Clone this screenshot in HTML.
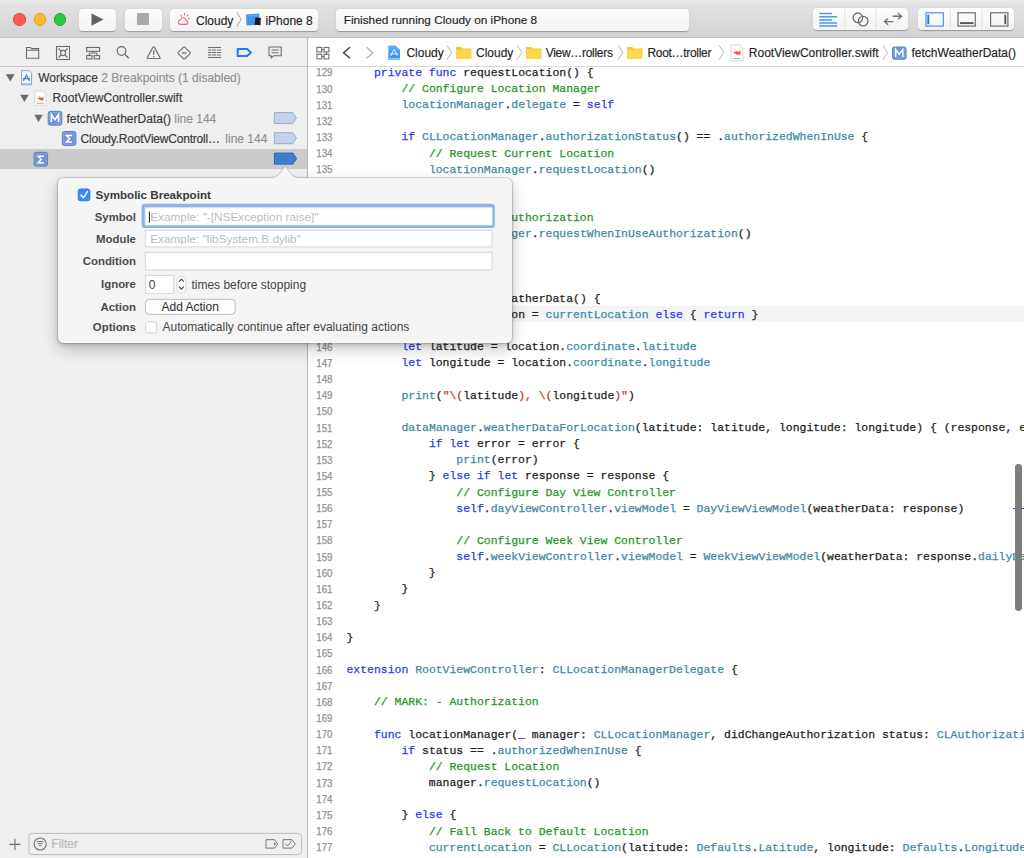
<!DOCTYPE html>
<html><head><meta charset="utf-8">
<style>
*{box-sizing:border-box;margin:0;padding:0}
html,body{width:1024px;height:858px;overflow:hidden;background:#fff;font-family:"Liberation Sans",sans-serif;position:relative}
.abs{position:absolute}
#toolbar{left:0;top:0;width:1024px;height:38.3px;background:linear-gradient(#ebebeb,#e3e3e3 12%,#d2d2d2);border-bottom:1px solid #c3c3c3}
.light{position:absolute;top:13.35px;width:12.2px;height:12.2px;border-radius:50%}
.tbtn{position:absolute;top:8.6px;height:22px;border-radius:4px;background:linear-gradient(#fdfdfd,#f3f3f3);box-shadow:0 0.5px 1px rgba(0,0,0,.28)}
.t12{font-size:12px;color:#242424;white-space:nowrap;-webkit-text-stroke:0.15px currentColor}
#sidebar{left:0;top:38px;width:307px;height:820px;background:#efefef}
#divider{left:307px;top:38px;width:1px;height:820px;background:#b9b9b9}
#navbar{left:0;top:38px;width:307px;height:29px;border-bottom:1px solid #c9c9c9;background:#efefef}
#editor{left:308px;top:38px;width:716px;height:820px;background:#fff}
#jump{left:308px;top:38px;width:716px;height:29px;border-bottom:1px solid #d9d9d9;background:#fff}
#code{left:308px;top:67px;width:716px;height:791px;overflow:hidden}
.lnum{font-family:"Liberation Sans",sans-serif;font-size:10.3px;line-height:16.14px;text-align:right;color:#929292;transform:scaleX(0.94);transform-origin:100% 0}
pre{font-family:"Liberation Mono",monospace;font-size:11.45px;line-height:16.14px;color:#1e1e1e;-webkit-text-stroke:0.25px currentColor}

.k{color:#2e39e6}
.f{color:#3a89a5}
.c{color:#1f971f}
.s{color:#c5352a}
.row{position:absolute;left:0;width:307px;height:20.3px}
.sb{color:#383838}
.gray{color:#8f8f8f}
.pb{font-size:11.6px;font-weight:bold;color:#3a3a3a;white-space:nowrap}
.pl{left:0;width:135.9px;text-align:right;font-size:11.4px;font-weight:bold;color:#4a4a4a;white-space:nowrap}
.ph{font-size:11.8px;color:#bcbcbc;white-space:nowrap}
.pt{font-size:12px;color:#454545;white-space:nowrap}
</style></head><body>

<!-- TOOLBAR -->
<div id="toolbar" class="abs">
  <div class="light" style="left:13.4px;background:#fc5b57;border:0.5px solid #e2463f"></div>
  <div class="light" style="left:33.7px;background:#fdbb2e;border:0.5px solid #e09f1e"></div>
  <div class="light" style="left:53.7px;background:#2ac840;border:0.5px solid #1aab2a"></div>
  <div class="tbtn" style="left:79px;width:37px"></div>
  <svg class="abs" style="left:91px;top:13px" width="13" height="14"><path d="M0.5 0.5 L12.5 6.6 L0.5 12.8 Z" fill="#636363"/></svg>
  <div class="tbtn" style="left:124.5px;width:37.5px"></div>
  <div class="abs" style="left:137px;top:13.3px;width:12.3px;height:12px;background:#a9a9a9"></div>
  <div class="tbtn" style="left:169.7px;width:148.5px"></div>
  <svg class="abs" style="left:170px;top:8px" width="150" height="23" fill="none">
    <g stroke="#f06b6b" stroke-width="1.15" stroke-linecap="round">
      <path d="M10.6 16.4 H15.9 Q17.9 16.4 17.9 14.5 Q17.9 12.7 16.1 12.5 Q15.7 9.7 13.1 9.7 Q10.9 9.7 10.3 11.8 Q8.4 12 8.4 14.1 Q8.4 16.4 10.6 16.4 Z"/>
      <path d="M14.5 5.6 V6.7 M17.9 7.2 L17.2 7.9 M19.3 10.8 H18.4 M10.8 7.4 L11.5 8.1"/>
    </g>
    <path d="M66.8 4.3 L71.2 11.4 L66.8 18.5" stroke="#a8a8a8" stroke-width="1"/>
    <path d="M76 6.4 L89.2 5.6 L89.8 16.8 L76.6 17.6 Z" fill="#3f97ee"/>
    <path d="M78 8 L87.6 7.4" stroke="#7cc0f8" stroke-width="0.7"/>
    <path d="M85.4 9.3 L90.9 9.9 L90.4 17.2 L84.6 16.8 Z" fill="#1c1c1c"/>
  </svg>
  <div class="abs t12" style="left:196px;top:13.5px">Cloudy</div>
  <div class="abs t12" style="left:265.4px;top:13.5px">iPhone 8</div>
  <div class="tbtn" style="left:336px;width:353px"></div>
  <div class="abs t12" style="left:343.7px;top:12.6px;font-size:11.8px">Finished running Cloudy on iPhone 8</div>
  <div class="tbtn" style="left:813px;width:95.2px;top:8.2px;height:22px"></div>
  <div class="tbtn" style="left:918.1px;width:95.8px;top:8.2px;height:22px"></div>
  <svg class="abs" style="left:812px;top:8px" width="212" height="23" fill="none">
    <path d="M32.7 0.5 V22 M64 0.5 V22 M138.3 0.5 V22 M170.2 0.5 V22" stroke="#dedede" stroke-width="0.8"/>
    <g stroke="#4f94f6" stroke-width="1.5">
      <path d="M7.3 5.6 H20 M7.3 8.7 H25.2 M7.3 11.9 H20 M7.3 15 H25.2 M7.3 18.1 H25.2"/>
    </g>
    <g stroke="#6e6e6e" stroke-width="1.3">
      <circle cx="45.9" cy="9.8" r="4.8"/><circle cx="51.2" cy="13.1" r="4.8"/>
    </g>
    <g stroke="#6e6e6e" stroke-width="1.3">
      <path d="M80.6 8.25 H89.6 M86 5.2 L89.6 8.25 L86 11.3"/>
      <path d="M72.5 13.6 H81.5 M76.1 10.6 L72.5 13.6 L76.1 16.7"/>
    </g>
    <rect x="114" y="4.8" width="17.3" height="13.3" stroke="#4a90f6" stroke-width="1.2"/>
    <path d="M116.3 6.8 V16.2" stroke="#1f74f3" stroke-width="1.9"/>
    <rect x="146" y="4.8" width="17.3" height="13.3" stroke="#6e6e6e" stroke-width="1.2"/>
    <path d="M148 15.1 H161.5" stroke="#555" stroke-width="1.9"/>
    <rect x="178.6" y="4.8" width="17.3" height="13.3" stroke="#6e6e6e" stroke-width="1.2"/>
    <path d="M193.3 6.8 V16.2" stroke="#555" stroke-width="1.9"/>
  </svg>
</div>

<!-- SIDEBAR -->
<div id="sidebar" class="abs"></div>
<div id="navbar" class="abs"></div>
<!-- nav toolbar icons -->
<svg class="abs" style="left:0;top:38px" width="307" height="29" fill="none" stroke="#6d6d6d" stroke-width="1.1">
  <!-- folder -->
  <path d="M26.5 9.5 V20.2 H38.7 V10.6 H31.5 L30.5 9.5 Z M26.5 12.2 H38.7"/>
  <!-- square x -->
  <rect x="56.5" y="8.5" width="13" height="13"/>
  <circle cx="63" cy="15" r="2.6"/>
  <path d="M58.5 10.5 L61 13 M67.5 10.5 L65 13 M58.5 19.5 L61 17 M67.5 19.5 L65 17"/>
  <!-- hierarchy -->
  <rect x="86.6" y="9.5" width="13" height="3.8"/>
  <path d="M93.1 13.3 V15 M89.3 15 H96.9 M89.3 15 V17.6 M96.9 15 V17.6"/>
  <rect x="86.6" y="17.6" width="5.4" height="3.3"/>
  <rect x="94.2" y="17.6" width="5.4" height="3.3"/>
  <!-- magnifier -->
  <circle cx="121.5" cy="13" r="4.3" stroke-width="1.2"/>
  <path d="M124.6 16.1 L128.8 20.3" stroke-width="1.4"/>
  <!-- warning -->
  <path d="M152.9 9.4 Q153.7 8.2 154.5 9.4 L160 19.4 Q160.6 20.5 159.3 20.5 H148.1 Q146.8 20.5 147.4 19.4 Z"/>
  <path d="M153.7 12.3 V16.8 M153.7 18 V19.2" stroke-width="1.2"/>
  <!-- diamond -->
  <path d="M183.4 9.4 Q184.2 8.6 185 9.4 L189.9 14.2 Q190.7 15 189.9 15.8 L185 20.6 Q184.2 21.4 183.4 20.6 L178.5 15.8 Q177.7 15 178.5 14.2 Z"/>
  <path d="M181.8 15 H186.6" stroke-width="1.3"/>
  <!-- list -->
  <path d="M208 9.5 H221 M208 12 H221 M208 14.5 H221 M208 17 H221 M208 19.5 H221" stroke-width="1"/>
  <path d="M211.5 11 V18.5 M216.5 11 V18.5" stroke="#efefef" stroke-width="0.8"/>
  <!-- breakpoint selected -->
  <path d="M237.7 11.1 H247.2 L250.9 14.5 L247.2 17.9 H237.7 Z" stroke="#1a7cf5" stroke-width="2" stroke-linejoin="round"/>
  <!-- comment -->
  <path d="M269 9 H281.2 V17.8 H273.5 L271.2 19.9 V17.8 H269 Z" stroke-linejoin="round"/>
  <path d="M271.5 12 H278.7 M271.5 14.8 H278.7" stroke-width="1"/>
</svg>

<!-- rows -->
<div class="abs" style="left:0;top:148.5px;width:307px;height:20px;background:#cbcbcb"></div>
<svg class="abs" style="left:0;top:67px" width="307" height="102">
  <path d="M5.9 7.2 H14.6 L10.25 14.5 Z" fill="#6b6b6b"/>
  <path d="M20.2 27.7 H28.7 L24.45 35 Z" fill="#6b6b6b"/>
  <path d="M34.2 47.8 H42.8 L38.5 55 Z" fill="#6b6b6b"/>
  <!-- workspace icon -->
  <path d="M21.5 3.7 H29.2 L31.6 6.1 V17.8 H21.5 Z" fill="#f7fafe" stroke="#7fa8d2" stroke-width="1"/>
  <path d="M22 16.2 H31.1 V17.6 H22 Z" fill="#8db4e0"/>
  <path d="M23.4 13.9 L26.4 8 L29.5 13.9 M22.8 11.6 H30" fill="none" stroke="#4382c4" stroke-width="1.25"/>
  <!-- swift file icon -->
  <path d="M34.8 24 H43 L46.1 27.1 V38.3 H34.8 Z" fill="#fdfdfd" stroke="#cfcfcf" stroke-width="0.8"/>
  <path d="M36.9 30.8 Q39.5 33.8 43.4 33.4 Q44 31.5 43.3 29.2 Q42.8 30.6 41.5 31 Q39.8 30.4 38.6 28.5 Q39 30 40 31.1 Q38.3 30.6 36.9 30.8 Z" fill="#f05138"/>
  <path d="M37 36.3 H44" stroke="#9a9a9a" stroke-width="0.8"/>
  <!-- M icon -->
  <rect x="48.2" y="44.3" width="13.6" height="13.9" rx="2.2" fill="#6f93d4" stroke="#4d7bc7" stroke-width="0.9"/>
  <rect x="49.3" y="45.4" width="11.4" height="11.7" rx="1.2" fill="none" stroke="#8fabe0" stroke-width="0.6"/>
  <path d="M51.4 55.1 V47.5 L54.95 52.6 L58.5 47.5 V55.1" fill="none" stroke="#fff" stroke-width="1.6" stroke-linejoin="miter"/>
  <!-- sigma row4 -->
  <rect x="62.3" y="64.5" width="13.6" height="13.9" rx="2.2" fill="#6f93d4" stroke="#4d7bc7" stroke-width="0.9"/>
  <rect x="63.4" y="65.6" width="11.4" height="11.7" rx="1.2" fill="none" stroke="#8fabe0" stroke-width="0.6"/>
  <path d="M72.1 68.4 H66.4 L69.6 71.7 L66.4 75 H72.1" fill="none" stroke="#fff" stroke-width="1.5"/>
  <!-- sigma row5 -->
  <rect x="34" y="85.3" width="13.6" height="13.9" rx="2.2" fill="#6f93d4" stroke="#4d7bc7" stroke-width="0.9"/>
  <rect x="35.1" y="86.4" width="11.4" height="11.7" rx="1.2" fill="none" stroke="#8fabe0" stroke-width="0.6"/>
  <path d="M43.8 89.2 H38.1 L41.3 92.5 L38.1 95.8 H43.8" fill="none" stroke="#fff" stroke-width="1.5"/>
  <!-- breakpoint indicators -->
  <path d="M274.4 45.6 H292.8 L296.4 51.1 L292.8 56.6 H274.4 Z" fill="#c3d3ea" stroke="#97aed2" stroke-width="1"/>
  <path d="M274.4 65.7 H292.8 L296.4 71.2 L292.8 76.7 H274.4 Z" fill="#c3d3ea" stroke="#97aed2" stroke-width="1"/>
  <path d="M274.4 86.1 H292.8 L296.6 91.6 L292.8 97.1 H274.4 Z" fill="#3d7bcf" stroke="#2a5eb0" stroke-width="1"/>
  <path d="M275.6 87.3 H292.2 L295.1 91.6 L292.2 95.9 H275.6 Z" fill="none" stroke="#5a92dc" stroke-width="0.5"/>
</svg>
<div class="abs t12 sb" style="left:38.2px;top:71.4px">Workspace <span class="gray">2 Breakpoints (1 disabled)</span></div>
<div class="abs t12 sb" style="left:52.4px;top:91.3px">RootViewController.swift</div>
<div class="abs t12 sb" style="left:66.4px;top:111.6px">fetchWeatherData() <span class="gray">line 144</span></div>
<div class="abs t12 sb" style="left:80.5px;top:131.6px;letter-spacing:-0.21px">Cloudy.RootViewControll…</div>
<div class="abs t12 gray" style="left:225.3px;top:131.6px">line 144</div>

<!-- filter bar -->
<svg class="abs" style="left:0;top:826px" width="307" height="32" fill="none">
  <path d="M9.3 18.4 H20.5 M14.9 12.8 V24" stroke="#6f6f6f" stroke-width="1.1"/>
  <rect x="29" y="7.4" width="272.5" height="21.2" rx="3" fill="#efefef" stroke="#bdbdbd" stroke-width="1"/>
  <circle cx="40.2" cy="18" r="6" stroke="#777" stroke-width="1.1"/>
  <path d="M37 15.6 H43.4 M37.8 17.6 H42.6 M38.8 19.6 H41.6" stroke="#777" stroke-width="1"/>
  <path d="M266 13.7 H274.5 L277.8 17.9 L274.5 22.1 H266 Z" stroke="#777" stroke-width="1"/>
  <path d="M274 16 L276 17.9 L274 19.8 Z" fill="#777"/>
  <path d="M283 13.7 H292 L295.3 17.9 L292 22.1 H283 Z" stroke="#777" stroke-width="1"/>
  <path d="M285.5 17.7 L287.7 20 L291.3 15.2" stroke="#777" stroke-width="1"/>
</svg>
<div class="abs t12" style="left:51.3px;top:837.2px;color:#b9b9b9">Filter</div>

<div id="divider" class="abs"></div>

<!-- EDITOR -->
<div id="editor" class="abs"></div>
<div id="jump" class="abs"></div>
<svg class="abs" style="left:308px;top:38px" width="716" height="29" fill="none">
  <!-- grid icon -->
  <g stroke="#6f6f6f" stroke-width="1.1">
    <rect x="8.9" y="9.4" width="4.8" height="4.6"/><rect x="16.1" y="9.4" width="4.8" height="4.6"/>
    <rect x="8.9" y="16.3" width="4.8" height="4.6"/><rect x="16.1" y="16.3" width="4.8" height="4.6"/>
    <path d="M13.7 11.7 H16.1 M13.7 18.6 H16.1 M18.5 14 V16.3"/>
  </g>
  <path d="M42 9.3 L35.6 14.8 L42 20.3" stroke="#3a3a3a" stroke-width="1.4"/>
  <path d="M58.7 9.3 L64.8 14.8 L58.7 20.3" stroke="#b3b3b3" stroke-width="1.3"/>
  <!-- project icon -->
  <defs><linearGradient id="pg" x1="0" y1="0" x2="0" y2="1"><stop offset="0" stop-color="#5db3f8"/><stop offset="1" stop-color="#2f86e6"/></linearGradient></defs>
  <path d="M80.3 7.6 H87.6 L92 12 V21.9 H80.3 Z" fill="url(#pg)"/>
  <path d="M80.3 19.8 H92 V21.9 H80.3 Z" fill="#8cc2f5"/>
  <path d="M82.6 18.2 L86.1 11.4 L89.6 18.2 M82 15.9 H90.3" stroke="#eaf5ff" stroke-width="0.9"/>
  <!-- chevrons -->
  <g stroke="#b5b5b5" stroke-width="1">
    <path d="M138.9 7.5 L143.6 14.5 L138.9 21.5"/>
    <path d="M209.2 7.5 L213.9 14.5 L209.2 21.5"/>
    <path d="M310.2 7.5 L314.9 14.5 L310.2 21.5"/>
    <path d="M411.2 7.5 L415.9 14.5 L411.2 21.5"/>
    <path d="M574.9 7.5 L579.6 14.5 L574.9 21.5"/>
  </g>
  <!-- folders -->
  <g>
    <path d="M148 9 H153.3 L154.5 10.4 H163.3 V21 H148 Z" fill="#f5c72c"/>
    <path d="M148 11.6 H163.3 V21 H148 Z" fill="#fbd84a"/>
    <path d="M218 9 H223.3 L224.5 10.4 H233.3 V21 H218 Z" fill="#f5c72c"/>
    <path d="M218 11.6 H233.3 V21 H218 Z" fill="#fbd84a"/>
    <path d="M319 9 H324.3 L325.5 10.4 H334.3 V21 H319 Z" fill="#f5c72c"/>
    <path d="M319 11.6 H334.3 V21 H319 Z" fill="#fbd84a"/>
  </g>
  <!-- swift file -->
  <path d="M422.9 6.8 H431.5 L435 10.3 V22.8 H422.9 Z" fill="#fdfdfd" stroke="#cdcdcd" stroke-width="0.8"/>
  <path d="M425 13.9 Q427.9 17.3 432.3 16.8 Q433 14.7 432.2 12.1 Q431.7 13.7 430.2 14.1 Q428.3 13.4 426.9 11.3 Q427.4 13 428.5 14.2 Q426.6 13.7 425 13.9 Z" fill="#f05138"/>
  <path d="M425.3 20.6 H432.6" stroke="#9a9a9a" stroke-width="0.8"/>
  <!-- M icon -->
  <rect x="584.5" y="9" width="13.6" height="12.3" rx="1.8" fill="#6f93d4" stroke="#4d7bc7" stroke-width="0.9"/>
  <rect x="585.6" y="10.1" width="11.4" height="10.1" rx="1" fill="none" stroke="#8fabe0" stroke-width="0.6"/>
  <path d="M587.7 19 V11.6 L591.3 16.3 L594.9 11.6 V19" fill="none" stroke="#fff" stroke-width="1.4"/>
</svg>
<div class="abs t12" style="left:406.4px;top:45.9px">Cloudy</div>
<div class="abs t12" style="left:476px;top:45.9px">Cloudy</div>
<div class="abs t12" style="left:545.7px;top:45.9px;letter-spacing:-0.29px">View…rollers</div>
<div class="abs t12" style="left:647.4px;top:45.9px;letter-spacing:-0.3px">Root…troller</div>
<div class="abs t12" style="left:748.8px;top:45.9px">RootViewController.swift</div>
<div class="abs t12" style="left:911.5px;top:45.9px">fetchWeatherData()</div>

<div id="code" class="abs">
<div class="abs" style="left:0;top:238.9px;width:716px;height:16.14px;background:#f4f4f5"></div>
<pre class="abs lnum" style="left:0;top:-1.6px;width:24.5px">129
130
131
132
133
134
135
136
137
138
139
140
141
142
143
144
145
146
147
148
149
150
151
152
153
154
155
156
157
158
159
160
161
162
163
164
165
166
167
168
169
170
171
172
173
174
175
176
177
178</pre>
<pre class="abs" style="left:38.5px;top:-2.12px">    <span class="k">private</span> <span class="k">func</span> requestLocation() {
        <span class="c">// Configure Location Manager</span>
        <span class="f">locationManager</span>.<span class="f">delegate</span> = <span class="k">self</span>

        <span class="k">if</span> <span class="f">CLLocationManager</span>.<span class="f">authorizationStatus</span>() == .<span class="f">authorizedWhenInUse</span> {
            <span class="c">// Request Current Location</span>
            <span class="f">locationManager</span>.<span class="f">requestLocation</span>()

        } <span class="k">else</span> {
            <span class="c">// Request Authorization</span>
            <span class="f">locationManager</span>.<span class="f">requestWhenInUseAuthorization</span>()
        }
    }

    <span class="k">private</span> <span class="k">func</span> fetchWeatherData() {
        <span class="k">guard</span> <span class="k">let</span> location = <span class="f">currentLocation</span> <span class="k">else</span> { <span class="k">return</span> }

        <span class="k">let</span> latitude = location.<span class="f">coordinate</span>.<span class="f">latitude</span>
        <span class="k">let</span> longitude = location.<span class="f">coordinate</span>.<span class="f">longitude</span>

        <span class="f">print</span>(<span class="s">"\(</span>latitude<span class="s">), \(</span>longitude<span class="s">)"</span>)

        <span class="f">dataManager</span>.<span class="f">weatherDataForLocation</span>(latitude: latitude, longitude: longitude) { (response, error) <span class="k">in</span>
            <span class="k">if</span> <span class="k">let</span> error = error {
                <span class="f">print</span>(error)
            } <span class="k">else</span> <span class="k">if</span> <span class="k">let</span> response = response {
                <span class="c">// Configure Day View Controller</span>
                <span class="k">self</span>.<span class="f">dayViewController</span>.<span class="f">viewModel</span> = <span class="f">DayViewViewModel</span>(weatherData: response)

                <span class="c">// Configure Week View Controller</span>
                <span class="k">self</span>.<span class="f">weekViewController</span>.<span class="f">viewModel</span> = <span class="f">WeekViewViewModel</span>(weatherData: response.<span class="f">dailyData</span>)
            }
        }
    }

}

<span class="k">extension</span> <span class="f">RootViewController</span>: <span class="f">CLLocationManagerDelegate</span> {

    <span class="c">// MARK: - Authorization</span>

    <span class="k">func</span> locationManager(<span class="k">_</span> manager: <span class="f">CLLocationManager</span>, didChangeAuthorization status: <span class="f">CLAuthorizationStatus</span>) {
        <span class="k">if</span> status == .<span class="f">authorizedWhenInUse</span> {
            <span class="c">// Request Location</span>
            manager.<span class="f">requestLocation</span>()

        } <span class="k">else</span> {
            <span class="c">// Fall Back to Default Location</span>
            <span class="f">currentLocation</span> = <span class="f">CLLocation</span>(latitude: <span class="f">Defaults</span>.<span class="f">Latitude</span>, longitude: <span class="f">Defaults</span>.<span class="f">Longitude</span>)
        }</pre>
</div>

<div class="abs" style="left:1012.8px;top:507.9px;width:11.2px;height:1px;background:#4a4ad8"></div>
<div class="abs" style="left:1015.4px;top:463.5px;width:6.7px;height:147px;border-radius:3.4px;background:#7d7d7d"></div>
<!-- POPOVER -->
<div class="abs" style="left:57.7px;top:177.9px;width:454.5px;height:165.6px;border-radius:5px;box-shadow:0 0 0 0.6px rgba(0,0,0,.22),0 6px 16px rgba(0,0,0,.22),0 2px 4px rgba(0,0,0,.16);background:#f5f5f5"></div>
<svg class="abs" style="left:262px;top:164px" width="48" height="17">
  <path d="M8.9 13.6 C 14 13.6, 17.3 10.8, 20.4 5.6 L 22.6 2.3 Q23.2 1.4 23.8 2.3 L 26 5.6 C 29.1 10.8, 32.4 13.6, 37.5 13.6 L 37.5 17 L 8.9 17 Z" fill="#f5f5f5" stroke="rgba(0,0,0,0.28)" stroke-width="0.7"/>
  <path d="M6 14.1 H41 V17 H6 Z" fill="#f5f5f5"/>
</svg>
<svg class="abs" style="left:57px;top:177px" width="456" height="168" fill="none">
  <!-- checkbox checked -->
  <rect x="21" y="11.8" width="12.1" height="12.1" rx="2.6" fill="#3c8cf6" stroke="#2f7de9" stroke-width="0.6"/>
  <path d="M23.9 18 L26.4 20.8 L30.4 14.6" stroke="#fff" stroke-width="1.4" stroke-linecap="round" stroke-linejoin="round"/>
  <!-- symbol focus ring -->
  <rect x="86.2" y="28.3" width="350" height="21" rx="1.5" stroke="#88b5ee" stroke-width="3.2"/>
  <rect x="88" y="30.8" width="347.6" height="17.6" fill="#fff" stroke="#a9c6ec" stroke-width="0.6"/>
  <path d="M92.4 34.5 V45.8" stroke="#1e1e1e" stroke-width="1"/>
  <!-- module field -->
  <rect x="88.3" y="53.3" width="346.7" height="16.6" fill="#fff" stroke="#d6d6d6" stroke-width="1"/>
  <!-- condition -->
  <rect x="88.3" y="75.3" width="346.7" height="17.7" fill="#fff" stroke="#d6d6d6" stroke-width="1"/>
  <!-- ignore field -->
  <rect x="88.4" y="98.4" width="28.3" height="18" fill="#fff" stroke="#d6d6d6" stroke-width="1"/>
  <!-- stepper -->
  <rect x="119.9" y="99.3" width="9" height="17.1" rx="4.5" fill="#fff" stroke="#cdcdcd" stroke-width="0.8"/>
  <path d="M122 104.7 L124.4 102.2 L126.8 104.7 M122 109.6 L124.4 112.1 L126.8 109.6" stroke="#3e3e3e" stroke-width="1.1"/>
  <!-- add action button -->
  <rect x="88.4" y="122.3" width="89.8" height="15.1" rx="4" fill="#fdfdfd" stroke="#b3b3b3" stroke-width="0.9"/>
  <!-- options checkbox -->
  <rect x="88.5" y="144.8" width="11.2" height="11.2" rx="2.8" fill="#fff" stroke="#cacaca" stroke-width="0.9"/>
</svg>
<div class="abs pb" style="left:95.5px;top:188px">Symbolic Breakpoint</div>
<div class="abs pl" style="top:210.5px">Symbol</div>
<div class="abs pl" style="top:232.6px">Module</div>
<div class="abs pl" style="top:255.4px">Condition</div>
<div class="abs pl" style="top:278.0px">Ignore</div>
<div class="abs pl" style="top:300.9px">Action</div>
<div class="abs pl" style="top:321.0px">Options</div>
<div class="abs ph" style="left:150.2px;top:209.6px">Example: "-[NSException raise]"</div>
<div class="abs ph" style="left:150.2px;top:231.7px">Example: "libSystem.B.dylib"</div>
<div class="abs pt" style="left:148.8px;top:277.6px">0</div>
<div class="abs pt" style="left:191.4px;top:277.7px">times before stopping</div>
<div class="abs pt" style="left:161.5px;top:300.1px;color:#2a2a2a">Add Action</div>
<div class="abs pt" style="left:162.5px;top:320.1px">Automatically continue after evaluating actions</div>

</body></html>
